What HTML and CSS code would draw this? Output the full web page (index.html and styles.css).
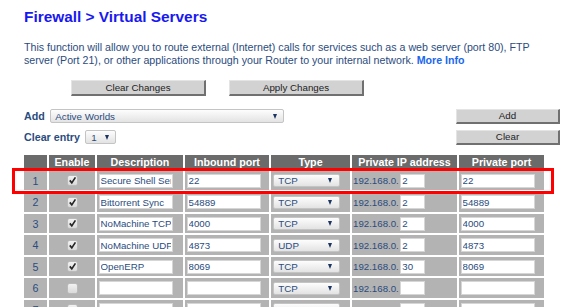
FILE: index.html
```html
<!DOCTYPE html>
<html lang="en">
<head>
<meta charset="utf-8">
<title>Firewall &gt; Virtual Servers</title>
<link rel="stylesheet" href="styles.css">
</head>
<body>
<div class="page">
  <h1 class="title">Firewall &gt; Virtual Servers</h1>
  <p class="intro">This function will allow you to route external (Internet) calls for services such as a web server (port 80), FTP server (Port 21), or other applications through your Router to your internal network. <a class="more" href="#">More Info</a></p>

  <div class="actions">
    <button class="btn btn-wide">Clear Changes</button>
    <button class="btn btn-wide">Apply Changes</button>
  </div>

  <div class="tool-row tool-row-add">
    <span class="tool-label">Add</span>
    <span class="dropdown dropdown-app"><span>Active Worlds</span><span class="caret"></span></span>
    <button class="btn btn-side">Add</button>
  </div>
  <div class="tool-row tool-row-clear">
    <span class="tool-label">Clear entry</span>
    <span class="dropdown dropdown-num"><span>1</span><span class="caret"></span></span>
    <button class="btn btn-side">Clear</button>
  </div>

  <div class="table-wrap">
    <table class="servers">
      <colgroup>
        <col class="w-num"><col class="w-en"><col class="w-desc"><col class="w-in"><col class="w-type"><col class="w-ip"><col class="w-port">
      </colgroup>
      <thead>
        <tr><th></th><th>Enable</th><th>Description</th><th>Inbound port</th><th>Type</th><th>Private IP address</th><th>Private port</th></tr>
      </thead>
      <tbody>
        <tr>
          <td class="c-num">1</td>
          <td class="c-en"><span class="check"><svg viewBox="0 0 9 9" width="9" height="9"><path d="M1.8 4.4 L3.8 6.9 L7.4 1.4" fill="none" stroke="#262626" stroke-width="1.7"/></svg></span></td>
          <td class="c-field"><input class="field" value="Secure Shell Server"></td>
          <td class="c-field"><input class="field" value="22"></td>
          <td class="c-type"><span class="dropdown dropdown-type"><span>TCP</span><span class="caret"></span></span></td>
          <td class="c-ip"><div class="ip"><span>192.168.0.</span><input class="field field-ip" value="2"></div></td>
          <td class="c-field"><input class="field" value="22"></td>
        </tr>
        <tr>
          <td class="c-num">2</td>
          <td class="c-en"><span class="check"><svg viewBox="0 0 9 9" width="9" height="9"><path d="M1.8 4.4 L3.8 6.9 L7.4 1.4" fill="none" stroke="#262626" stroke-width="1.7"/></svg></span></td>
          <td class="c-field"><input class="field" value="Bittorrent Sync"></td>
          <td class="c-field"><input class="field" value="54889"></td>
          <td class="c-type"><span class="dropdown dropdown-type"><span>TCP</span><span class="caret"></span></span></td>
          <td class="c-ip"><div class="ip"><span>192.168.0.</span><input class="field field-ip" value="2"></div></td>
          <td class="c-field"><input class="field" value="54889"></td>
        </tr>
        <tr>
          <td class="c-num">3</td>
          <td class="c-en"><span class="check"><svg viewBox="0 0 9 9" width="9" height="9"><path d="M1.8 4.4 L3.8 6.9 L7.4 1.4" fill="none" stroke="#262626" stroke-width="1.7"/></svg></span></td>
          <td class="c-field"><input class="field" value="NoMachine TCP"></td>
          <td class="c-field"><input class="field" value="4000"></td>
          <td class="c-type"><span class="dropdown dropdown-type"><span>TCP</span><span class="caret"></span></span></td>
          <td class="c-ip"><div class="ip"><span>192.168.0.</span><input class="field field-ip" value="2"></div></td>
          <td class="c-field"><input class="field" value="4000"></td>
        </tr>
        <tr>
          <td class="c-num">4</td>
          <td class="c-en"><span class="check"><svg viewBox="0 0 9 9" width="9" height="9"><path d="M1.8 4.4 L3.8 6.9 L7.4 1.4" fill="none" stroke="#262626" stroke-width="1.7"/></svg></span></td>
          <td class="c-field"><input class="field" value="NoMachine UDP"></td>
          <td class="c-field"><input class="field" value="4873"></td>
          <td class="c-type"><span class="dropdown dropdown-type"><span>UDP</span><span class="caret"></span></span></td>
          <td class="c-ip"><div class="ip"><span>192.168.0.</span><input class="field field-ip" value="2"></div></td>
          <td class="c-field"><input class="field" value="4873"></td>
        </tr>
        <tr>
          <td class="c-num">5</td>
          <td class="c-en"><span class="check"><svg viewBox="0 0 9 9" width="9" height="9"><path d="M1.8 4.4 L3.8 6.9 L7.4 1.4" fill="none" stroke="#262626" stroke-width="1.7"/></svg></span></td>
          <td class="c-field"><input class="field" value="OpenERP"></td>
          <td class="c-field"><input class="field" value="8069"></td>
          <td class="c-type"><span class="dropdown dropdown-type"><span>TCP</span><span class="caret"></span></span></td>
          <td class="c-ip"><div class="ip"><span>192.168.0.</span><input class="field field-ip" value="30"></div></td>
          <td class="c-field"><input class="field" value="8069"></td>
        </tr>
        <tr>
          <td class="c-num">6</td>
          <td class="c-en"><span class="check"></span></td>
          <td class="c-field"><input class="field" value=""></td>
          <td class="c-field"><input class="field" value=""></td>
          <td class="c-type"><span class="dropdown dropdown-type"><span>TCP</span><span class="caret"></span></span></td>
          <td class="c-ip"><div class="ip"><span>192.168.0.</span><input class="field field-ip" value=""></div></td>
          <td class="c-field"><input class="field" value=""></td>
        </tr>
        <tr>
          <td class="c-num">7</td>
          <td class="c-en"><span class="check"></span></td>
          <td class="c-field"><input class="field" value=""></td>
          <td class="c-field"><input class="field" value=""></td>
          <td class="c-type"><span class="dropdown dropdown-type"><span>TCP</span><span class="caret"></span></span></td>
          <td class="c-ip"><div class="ip"><span>192.168.0.</span><input class="field field-ip" value=""></div></td>
          <td class="c-field"><input class="field" value=""></td>
        </tr>
      </tbody>
    </table>
    <div class="highlight"></div>
  </div>
</div>
</body>
</html>
```

FILE: styles.css
```css
* { box-sizing: border-box; }
html, body { margin: 0; background: #fff; }
body {
  font-family: "Liberation Sans", Arial, sans-serif;
  color: #2b4c7e;
}
.page {
  position: relative;
  padding: 8px 9px 0 24px;
}
.title {
  margin: 0;
  font-size: 15.4px;
  line-height: 18px;
  font-weight: bold;
  color: #1818f0;
}
.intro {
  margin: 15.4px 0 0;
  font-size: 10.65px;
  line-height: 13px;
  color: #2b4c7e;
}
.more {
  color: #1a66ee;
  font-weight: bold;
  text-decoration: none;
}
.actions {
  display: flex;
  gap: 23px;
  margin-top: 12.6px;
  padding-left: 47px;
}
.btn {
  font-family: "Liberation Sans", Arial, sans-serif;
  font-size: 9.75px;
  color: #222;
  background: #d2d2d2;
  border-style: solid;
  border-width: 1px 2px 2px 1px;
  border-color: #e4e4e4 #707070 #707070 #e4e4e4;
  padding: 0;
  margin: 0;
  line-height: 1;
}
.btn-wide { width: 135px; height: 16px; }
.tool-row {
  display: flex;
  align-items: center;
  gap: 5.5px;
  height: 15px;
}
.tool-row-add { margin-top: 13px; }
.tool-row-clear { margin-top: 6px; }
.tool-label {
  font-size: 10.7px;
  font-weight: bold;
  color: #2b4c7e;
}
.btn-side { margin-left: auto; width: 104px; height: 15px; }
.dropdown {
  display: inline-flex;
  align-items: center;
  justify-content: space-between;
  height: 14px;
  border: 1px solid #c4c4c4;
  border-radius: 2px;
  background: linear-gradient(#fdfdfd, #e3e3e3);
  font-size: 9.8px;
  color: #2b4c7e;
  padding: 0 6px 0 4px;
}
.dropdown-app { width: 234px; }
.dropdown-num { width: 31px; padding-left: 5px; }
.caret {
  width: 0;
  height: 0;
  border-left: 2.5px solid transparent;
  border-right: 2.5px solid transparent;
  border-top: 5px solid #1c3560;
}
.table-wrap {
  position: relative;
  margin: 8px 0 0 -2px;
}
.servers {
  table-layout: fixed;
  width: 524px;
  border-collapse: separate;
  border-spacing: 2px;
}
.w-num { width: 23px; }
.w-en { width: 46px; }
.w-desc { width: 86px; }
.w-in { width: 84px; }
.w-type { width: 79px; }
.w-ip { width: 105px; }
.w-port { width: 85px; }
.servers th {
  background: #6b6b6b;
  color: #fff;
  font-size: 10.7px;
  font-weight: bold;
  height: 14px;
  line-height: 14px;
  padding: 0;
  white-space: nowrap;
}
.servers td {
  background: #b3b3b3;
  height: 19.5px;
  padding: 0;
  font-size: 9.7px;
  vertical-align: middle;
}
.servers td.c-num { text-align: center; font-size: 10.7px; }
.servers td.c-field { padding-left: 1.5px; }
.servers td.c-type { padding-left: 2.3px; }
.servers td.c-ip { padding-left: 1px; }
.check {
  display: block;
  width: 9px;
  height: 9px;
  margin: 0 auto;
  border-radius: 1.5px;
  background: linear-gradient(#f2f2f2, #dadada);
  box-shadow: 0 0 0 0.5px #c2c2c2;
}
.check svg { display: block; }
.field {
  display: block;
  width: 74px;
  height: 14px;
  margin: 0;
  padding: 0 1px;
  border: 1px solid #d6d6d6;
  background: #fff;
  font-family: "Liberation Sans", Arial, sans-serif;
  font-size: 9.7px;
  color: #2b4c7e;
  outline: none;
}
.ip {
  display: flex;
  align-items: center;
  gap: 1.5px;
}
.field-ip { width: 24.5px; }
.dropdown-type {
  display: flex;
  width: 67px;
  height: 13px;
  padding: 0 7px 0 4px;
}
.highlight {
  position: absolute;
  left: -10px;
  top: 14.7px;
  width: 542px;
  height: 26.6px;
  border: 3px solid #ff0000;
}
```
